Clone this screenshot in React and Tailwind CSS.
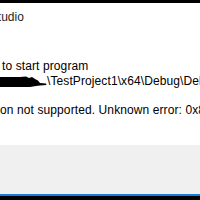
export default function App() {
  return (
    <div className="w-[200px] h-[200px] overflow-hidden bg-white flex flex-col font-['Liberation_Sans',Arial,sans-serif] text-[12px] leading-[15px] text-black">
      <div className="h-[3px] shrink-0 bg-black" />
      <div className="mt-[6px] ml-[-98px] whitespace-nowrap leading-[16px] text-[#1e1e1e]">
        Microsoft Visual Studio
      </div>
      <div className="mt-[34px] ml-[-40px] whitespace-nowrap tracking-[0.1px]">
        <p>Unable to start program</p>
        <p className="flex items-start">
          <svg width="87" height="15" viewBox="0 0 87 15" className="shrink-0">
            <path
              d="M0 3 L60 3 L66 2.5 L69 4 L72 3 L75 5 L78 6.5 L80 9 L86 9.5 L86.5 11 L80 11.5 L76 12 L70 13 L0 13 Z"
              fill="#000"
            />
          </svg>
          <span>\TestProject1\x64\Debug\DebugTest.exe'.</span>
        </p>
        <p className="mt-[14px]">Operation not supported. Unknown error: 0x80131c30.</p>
      </div>
      <div className="mt-auto h-[49px] shrink-0 bg-[#f0f0f0]" />
      <div className="h-[2px] shrink-0 bg-[#1a7bd4]" />
      <div className="h-[4px] shrink-0 bg-black" />
    </div>
  );
}
